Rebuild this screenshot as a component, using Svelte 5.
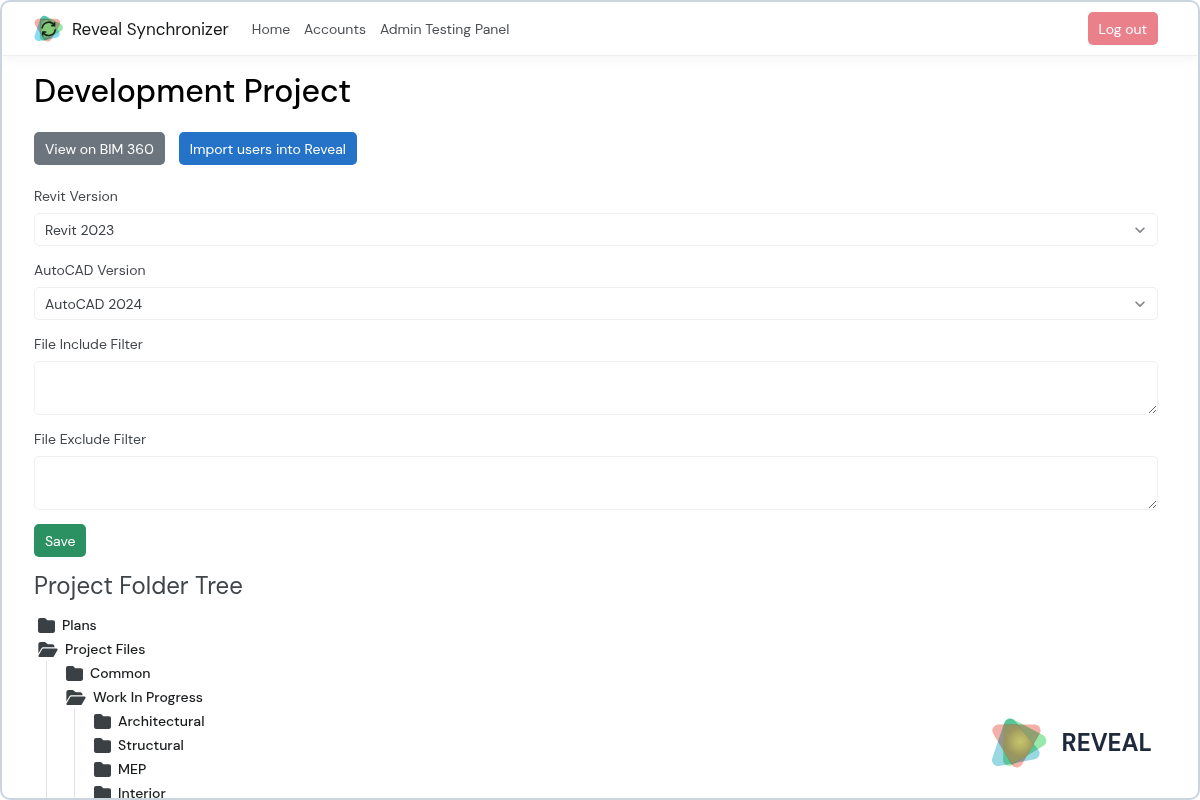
<script>
  let revitVersion = "2023";
  let autocadVersion = "2024";
  let includeFilter = "";
  let excludeFilter = "";

  const links = ["Home", "Accounts", "Admin Testing Panel"];
  const revitVersions = ["2021", "2022", "2023", "2024"];
  const autocadVersions = ["2022", "2023", "2024"];

  let tree = [
    { name: "Plans" },
    {
      name: "Project Files",
      open: true,
      children: [
        { name: "Common" },
        {
          name: "Work In Progress",
          open: true,
          children: [
            { name: "Architectural" },
            { name: "Structural" },
            { name: "MEP" },
            { name: "Interior" },
          ],
        },
      ],
    },
  ];

  const toggle = (node) => {
    if (!node.children) return;
    node.open = !node.open;
    tree = tree;
  };
</script>

{#snippet triangles(glow)}
  <g class="blue"><path d="M57 22 L21 128 L127 108 Z" /></g>
  <g class="green"><path d="M57 22 L147 70 L54 127 Z" /></g>
  <g class="red"><path d="M22 40 L130 40 L77 132 Z" /></g>
  <!-- where all three overlap -->
  <path
    d="M38 22 H80 L128 81 L107 116 L66 139 Q62 141 58 134 L36 98 V30 Z"
    fill="url(#{glow})" />
{/snippet}

{#snippet chevron()}
  <svg class="chevron" viewBox="0 0 16 16" aria-hidden="true">
    <path d="M3.5 6 L8 10.5 L12.5 6" />
  </svg>
{/snippet}

{#snippet folders(nodes)}
  <ul>
    {#each nodes as node}
      <li>
        <button type="button" class="node" on:click={() => toggle(node)}>
          {#if node.open}
            <svg class="folder-open" viewBox="0 32 576 448" aria-hidden="true">
              <path
                d="M88.7 223.8L0 375.8V96C0 60.7 28.7 32 64 32H181.5c17 0 33.3 6.7 45.3 18.7l26.5 26.5c12 12 28.3 18.7 45.3 18.7H416c35.3 0 64 28.7 64 64v32H144c-22.8 0-43.8 12.1-55.3 31.8zm27.6 16.1C122.1 230 132.6 224 144 224H544c11.5 0 22 6.1 27.7 16.1s5.7 22.2-.1 32.1l-112 192C453.9 474 443.4 480 432 480H32c-11.5 0-22-6.1-27.7-16.1s-5.7-22.2 .1-32.1l112-192z" />
            </svg>
          {:else}
            <svg class="folder" viewBox="0 32 512 448" aria-hidden="true">
              <path
                d="M64 480H448c35.3 0 64-28.7 64-64V160c0-35.3-28.7-64-64-64H288c-10.1 0-19.6-4.7-25.6-12.8L243.2 57.6C231.1 41.5 212.1 32 192 32H64C28.7 32 0 60.7 0 96V416c0 35.3 28.7 64 64 64z" />
            </svg>
          {/if}
          {node.name}
        </button>
        {#if node.open}
          {@render folders(node.children)}
        {/if}
      </li>
    {/each}
  </ul>
{/snippet}

<div class="window">
  <header>
    <a class="brand" href="#home">
      <svg class="brand-icon" viewBox="-8 -8 188 174" aria-hidden="true">
        <defs>
          <radialGradient
            id="brandGlow"
            gradientUnits="userSpaceOnUse"
            cx="84"
            cy="78"
            r="62">
            <stop offset="0" stop-color="#90dc78" />
            <stop offset="0.5" stop-color="#84c876" />
            <stop offset="1" stop-color="#769c7c" />
          </radialGradient>
          <radialGradient id="brandHalo">
            <stop offset="0.5" stop-color="#84c876" stop-opacity="0.9" />
            <stop offset="1" stop-color="#84b880" stop-opacity="0" />
          </radialGradient>
        </defs>
        {@render triangles("brandGlow")}
        <circle cx="84" cy="78" r="62" fill="url(#brandHalo)" />
        <g class="sync">
          <path d="M43 76 A41 41 0 0 1 119 56" />
          <path d="M125 80 A41 41 0 0 1 49 100" />
          <path d="M121 36 V58 H99" />
          <path d="M47 120 V98 H69" />
        </g>
      </svg>
      Reveal Synchronizer
    </a>
    <nav>
      {#each links as link}
        <a href="#{link.toLowerCase().replaceAll(' ', '-')}">{link}</a>
      {/each}
    </nav>
    <button type="button" class="btn logout">Log out</button>
  </header>

  <main>
    <h1>Development Project</h1>
    <div class="actions">
      <button type="button" class="btn secondary">View on BIM 360</button>
      <button type="button" class="btn primary">Import users into Reveal</button>
    </div>

    <form on:submit|preventDefault>
      <label for="revit">Revit Version</label>
      <div class="select">
        <select id="revit" bind:value={revitVersion}>
          {#each revitVersions as version}
            <option value={version}>Revit {version}</option>
          {/each}
        </select>
        {@render chevron()}
      </div>
      <label for="autocad">AutoCAD Version</label>
      <div class="select">
        <select id="autocad" bind:value={autocadVersion}>
          {#each autocadVersions as version}
            <option value={version}>AutoCAD {version}</option>
          {/each}
        </select>
        {@render chevron()}
      </div>
      <label for="include">File Include Filter</label>
      <textarea id="include" bind:value={includeFilter}></textarea>
      <label for="exclude">File Exclude Filter</label>
      <textarea id="exclude" bind:value={excludeFilter}></textarea>
      <button type="submit" class="btn save">Save</button>
    </form>

    <h2>Project Folder Tree</h2>
    <div class="tree">
      {@render folders(tree)}
    </div>
  </main>

  <div class="watermark">
    <svg viewBox="0 0 170 154" aria-hidden="true">
      <defs>
        <radialGradient
          id="markGlow"
          gradientUnits="userSpaceOnUse"
          cx="87"
          cy="73"
          r="70">
          <stop offset="0" stop-color="#c4c46c" />
          <stop offset="0.2" stop-color="#bcb866" />
          <stop offset="0.6" stop-color="#9c965e" />
          <stop offset="1" stop-color="#8a966c" />
        </radialGradient>
      </defs>
      {@render triangles("markGlow")}
    </svg>
    REVEAL
  </div>
</div>

<style>
  :global(body) {
    background: #fff;
  }

  .window {
    position: relative;
    box-sizing: border-box;
    height: 100vh;
    overflow: hidden;
    border: 2px solid #cbd5e0;
    border-radius: 10px;
    background: #fff;
    color: #212529;
    font-family: "DM Sans", Inter, "Open Sans", sans-serif;
    font-size: 14px;
    line-height: 20px;
  }

  header {
    display: flex;
    align-items: center;
    height: 53px;
    padding: 0 40px 0 32px;
    border-bottom: 1px solid #f0f0f1;
    box-shadow: 0 4px 12px rgba(0, 0, 0, 0.04);
  }
  header a {
    color: #4b4f54;
    text-decoration: none;
  }
  header .brand {
    display: flex;
    align-items: center;
    gap: 8px;
    color: #151718;
    font-size: 17px;
  }
  .brand-icon {
    width: 30px;
    height: 30px;
  }
  nav {
    display: flex;
    gap: 14px;
    margin-left: 23px;
  }
  .logout {
    margin-left: auto;
    background: #ea808a;
  }

  .blue,
  .green,
  .red {
    mix-blend-mode: multiply;
    stroke-width: 36;
    stroke-linejoin: round;
  }
  .brand-icon .blue,
  .brand-icon .green,
  .brand-icon .red {
    stroke-width: 52;
  }
  .blue {
    fill: #98d8e2;
    stroke: #98d8e2;
  }
  .green {
    fill: #98e8ac;
    stroke: #98e8ac;
  }
  .red {
    fill: #f4b0a6;
    stroke: #f4b0a6;
  }
  .brand-icon .blue {
    fill: #8cdcf8;
    stroke: #8cdcf8;
  }
  .sync {
    fill: none;
    stroke: #14241c;
    stroke-width: 10;
  }

  .btn {
    box-sizing: border-box;
    height: 33px;
    padding: 0 11px;
    border: none;
    border-radius: 5px;
    color: #fff;
    font: inherit;
    cursor: pointer;
  }
  .secondary {
    background: #6c757d;
  }
  .primary {
    background: #2573c9;
  }
  .save {
    background: #2c9162;
  }

  main {
    padding: 15px 40px 0 32px;
  }
  h1 {
    margin: 0 0 21px;
    color: #000;
    font-size: 32px;
    font-weight: 500;
    line-height: 40px;
  }
  h2 {
    margin: 14px 0 12px;
    color: #3f4448;
    font-size: 24px;
    font-weight: 400;
    line-height: 30px;
  }
  .actions {
    display: flex;
    gap: 14px;
    margin-bottom: 21px;
  }

  label {
    display: block;
    margin-bottom: 7px;
    color: #43474b;
  }
  .select {
    position: relative;
    margin-bottom: 14px;
  }
  select,
  textarea {
    display: block;
    box-sizing: border-box;
    width: 100%;
    border: 1px solid #eeeff0;
    border-radius: 5px;
    background: #fff;
    color: #3c4044;
    font: inherit;
  }
  select {
    appearance: none;
    height: 33px;
    padding: 0 32px 0 10px;
  }
  textarea {
    height: 54px;
    margin-bottom: 14px;
    padding: 5px 10px;
    resize: vertical;
  }
  .chevron {
    position: absolute;
    top: 10px;
    right: 11px;
    width: 14px;
    height: 14px;
    fill: none;
    stroke: #85898d;
    stroke-width: 2;
    stroke-linecap: round;
    stroke-linejoin: round;
    pointer-events: none;
  }

  .tree {
    padding-left: 4px;
  }
  ul {
    margin: 0;
    padding: 0;
    list-style: none;
  }
  li ul {
    margin-left: 8px;
    padding-left: 19px;
    border-left: 1px solid #dfe1e6;
  }
  .node {
    display: flex;
    align-items: center;
    gap: 7px;
    height: 24px;
    padding: 0;
    border: none;
    background: none;
    color: #1a1c1e;
    font: inherit;
    font-weight: 500;
    cursor: pointer;
  }
  .node svg {
    height: 15px;
    fill: #3b4044;
  }
  .folder {
    width: 17px;
  }
  .folder-open {
    width: 20px;
  }

  .watermark {
    position: absolute;
    right: 46px;
    bottom: 29px;
    display: flex;
    align-items: center;
    gap: 14px;
    color: #1e293b;
    font-size: 24px;
    font-weight: 700;
    line-height: 30px;
  }
  .watermark svg {
    width: 57px;
    height: 52px;
  }
</style>
